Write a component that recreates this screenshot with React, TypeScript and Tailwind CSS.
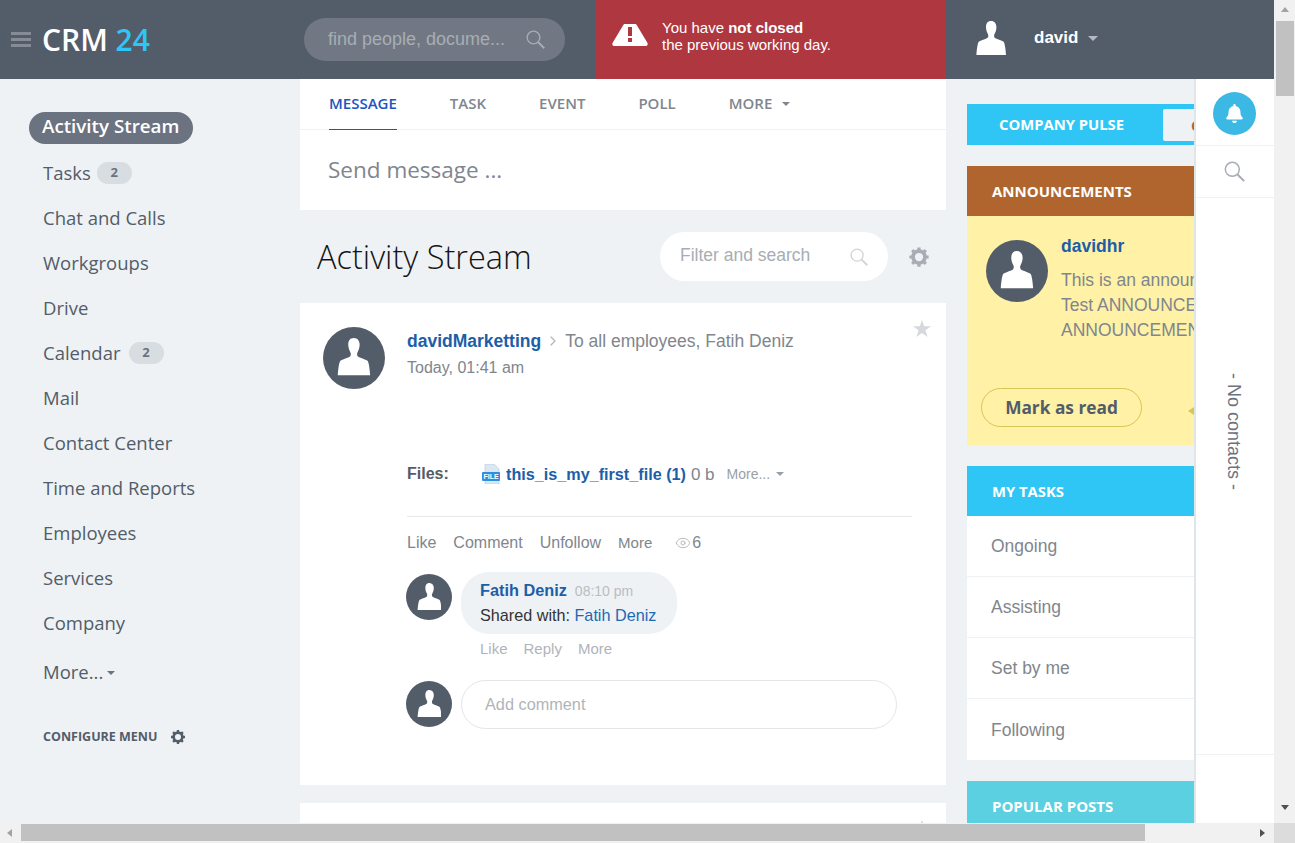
import { Eye, ChevronRight } from 'lucide-react';
import { FaBell } from 'react-icons/fa';

const menu = [
  { label: 'Tasks', count: 2, badge: 'ml-[6px]' },
  { label: 'Chat and Calls' },
  { label: 'Workgroups' },
  { label: 'Drive' },
  { label: 'Calendar', count: 2, badge: 'ml-[8px]' },
  { label: 'Mail' },
  { label: 'Contact Center' },
  { label: 'Time and Reports' },
  { label: 'Employees' },
  { label: 'Services' },
  { label: 'Company' },
];

const tasks = ['Ongoing', 'Assisting', 'Set by me', 'Following'];

const Person = ({ className }: { className: string }) => (
  <svg viewBox="0 0 30 34" className={className} fill="currentColor">
    <path d="M15 0c3.600 0 5.400 2.600 5.400 6.200 0 3-1 5.200-2 7-.5 1-.4 3 .4 3.600 1.500 1 7.200 2.800 8.800 4 1.200 1.200 2 7.400 2.400 13.200H.4c.4-5.800 1.200-12 2.400-13.200 1.600-1.200 7.300-3 8.800-4 .8-.6.9-2.600.4-3.600-1-1.800-2-4-2-7C10 2.600 11.400 0 15 0z" />
  </svg>
);

const Avatar = ({ size }: { size: string }) => (
  <div className={`${size} shrink-0 rounded-full bg-[#535c69] flex items-center justify-center text-white`}>
    <Person className="w-[54%] h-[60%] mb-[3%]" />
  </div>
);

const Gear = ({ className }: { className: string }) => (
  <svg viewBox="0 0 24 24" className={className} fill="none" stroke="currentColor">
    <circle cx="12" cy="12" r="6.500" strokeWidth="4" />
    <g strokeWidth="3.500">
      <path d="M12 1.500v4M12 18.500v4M1.500 12h4M18.500 12h4M4.600 4.600l2.800 2.800M16.600 16.600l2.800 2.800M4.600 19.400l2.800-2.800M16.600 7.400l2.800-2.800" />
    </g>
  </svg>
);

const Star = ({ className }: { className: string }) => (
  <svg viewBox="0 0 20 19" className={className} fill="currentColor">
    <polygon points="10,0 12.400,7 20,7 13.800,11.500 16.200,19 10,14.400 3.800,19 6.200,11.500 0,7 7.600,7" />
  </svg>
);

const SearchIcon = ({ className }: { className: string }) => (
  <svg viewBox="0 0 24 24" className={className} fill="none" stroke="currentColor">
    <circle cx="9.500" cy="9.500" r="8" strokeWidth="1.700" />
    <path d="M15.500 15.500L23 23" strokeWidth="2.400" />
  </svg>
);

const Caret = ({ className }: { className: string }) => (
  <span className={`inline-block w-0 h-0 border-x-[4px] border-x-transparent border-t-[4px] ${className}`} />
);

const FileIcon = () => (
  <svg viewBox="0 0 18 20" className="w-[18px] h-[20px] shrink-0 mt-[3px]">
    <path d="M3 0h9l5 5v15H3z" fill="#dbe7f3" stroke="#b4c8dc" strokeWidth="0.600" />
    <rect x="0" y="8" width="18" height="9" rx="1" fill="#2f8fe0" />
    <text x="9" y="15" textAnchor="middle" fontSize="7" fontWeight="700" fill="#fff" fontFamily="Liberation Sans">FILE</text>
  </svg>
);

export default function App() {
  return (
    <div className="relative w-[1295px] h-[843px] overflow-hidden bg-[#eef2f4] font-['Liberation_Sans',Arial,sans-serif]">
      <div className="w-[1274px] h-[823px] overflow-hidden">
        {/* top bar */}
        <header className="h-[79px] flex bg-[#535c69]">
          <div className="w-[304px] flex items-center pl-[11px]">
            <div className="w-[20px] flex flex-col gap-[3px] mr-[11px]">
              <span className="h-[3px] bg-[#868c95]" />
              <span className="h-[3px] bg-[#868c95]" />
              <span className="h-[3px] bg-[#868c95]" />
            </div>
            <span className="font-['Open_Sans',sans-serif] font-semibold text-[30px] text-white leading-none">
              CRM <span className="text-[#2fc6f6]">24</span>
            </span>
          </div>
          <div className="w-[292px]">
            <div className="mt-[18px] w-[261px] h-[43px] rounded-full bg-[#717884] flex items-center pl-[24px] pr-[20px] justify-between">
              <span className="text-[18px] text-[#a8adb4]">find people, docume...</span>
              <SearchIcon className="w-[19px] h-[19px] text-[#a8adb4]" />
            </div>
          </div>
          <div className="w-[350px] bg-[#ae3740] flex items-center pl-[16px] text-white">
            <svg viewBox="0 0 36 22" className="w-[36px] h-[22px] mb-[10px]">
              <path d="M11 1.500c.3-.9 1-1.500 2-1.500h10c1 0 1.700.6 2 1.500l10.500 17.500c.6 1.500-.3 3-2 3H2.500c-1.700 0-2.600-1.500-2-3z" fill="#fff" />
              <rect x="16" y="3" width="4" height="9" fill="#ae3740" />
              <rect x="16" y="14" width="4" height="4" fill="#ae3740" />
            </svg>
            <div className="ml-[14px] mb-[7px] text-[15px] leading-[17px]">
              <div>You have <b>not closed</b></div>
              <div>the previous working day.</div>
            </div>
          </div>
          <div className="flex-1 flex items-center pl-[30px] text-white">
            <Person className="w-[30px] h-[34px] mb-[4px]" />
            <span className="ml-[28px] mb-[3px] font-bold text-[17px]">david</span>
            <Caret className="ml-[10px] mb-[3px] border-t-[#b5b9bf] border-x-[5px] border-t-[5px]" />
          </div>
        </header>

        <div className="flex h-[744px]">
          {/* left menu */}
          <nav className="w-[300px] shrink-0 pt-[26px] font-['Open_Sans',sans-serif] text-[18.500px] text-[#535c69]">
            <div className="h-[45px] pt-[1px] flex items-center pl-[29px]">
              <span className="h-[32px] rounded-full bg-[#6b7280] text-white font-semibold pl-[13px] pr-[14px] pb-[3px] flex items-center text-[18.750px]">
                Activity Stream
              </span>
            </div>
            {menu.map((item) => (
              <div key={item.label} className="h-[45px] flex items-center pl-[43px]">
                {item.label}
                {item.count && (
                  <span className={`${item.badge} w-[35px] h-[22px] rounded-full bg-[#d8dde1] text-[13px] font-bold text-[#6b7280] flex items-center justify-center`}>
                    {item.count}
                  </span>
                )}
              </div>
            ))}
            <div className="mt-[4px] h-[45px] flex items-center pl-[43px]">
              More...
              <Caret className="ml-[4px] mt-[2px] border-t-[#6b7280]" />
            </div>
            <div className="mt-[34px] flex items-center pl-[43px] text-[12.500px] font-bold uppercase">
              Configure menu
              <Gear className="ml-[13px] w-[16px] h-[16px]" />
            </div>
          </nav>

          {/* center column */}
          <main className="w-[646px] shrink-0">
            <div className="bg-white h-[131px]">
              <div className="h-[51px] border-b border-[#eef2f4] flex pl-[29px] gap-[53px] font-['Open_Sans',sans-serif] font-semibold text-[15px] uppercase text-[#80868e]">
                <span className="h-[51px] pb-[2px] flex items-center text-[#2054c0] border-b-[1px] border-[#2054c0]">Message</span>
                <span className="h-[51px] pb-[2px] flex items-center">Task</span>
                <span className="h-[51px] pb-[2px] flex items-center">Event</span>
                <span className="h-[51px] pb-[2px] flex items-center">Poll</span>
                <span className="h-[51px] pb-[2px] flex items-center">
                  More
                  <Caret className="ml-[10px] border-t-[#80868e]" />
                </span>
              </div>
              <div className="h-[80px] flex items-center pl-[28px] font-['Open_Sans',sans-serif] text-[22.500px] text-[#80868e]">
                Send message ...
              </div>
            </div>

            <div className="h-[93px] flex items-center pl-[17px]">
              <h1 className="font-['Open_Sans',sans-serif] font-light text-[32.500px] text-[#151515] flex-1 pt-[2px]">Activity Stream</h1>
              <div className="w-[228px] h-[49px] rounded-full bg-white flex items-center justify-between pl-[20px] pr-[20px]">
                <span className="text-[17.500px] text-[#a8adb4] pb-[2px]">Filter and search</span>
                <SearchIcon className="w-[18px] h-[18px] text-[#d0d4d8]" />
              </div>
              <Gear className="ml-[20px] mr-[16px] w-[22px] h-[22px] text-[#a8adb4]" />
            </div>

            <article className="relative bg-white h-[482px] pl-[23px] pt-[24px]">
              <Star className="absolute right-[15px] top-[17px] w-[18px] h-[17px] text-[#d5d8dc]" />
              <div className="flex">
                <Avatar size="w-[62px] h-[62px]" />
                <div className="ml-[22px]">
                  <div className="flex items-center text-[17.500px] mt-[2px] h-[24px]">
                    <span className="font-bold text-[#1d5ea8]">davidMarketting</span>
                    <ChevronRight className="mx-[4px] w-[16px] h-[16px] text-[#b5b9bf]" />
                    <span className="text-[#80868e]">To all employees, Fatih Deniz</span>
                  </div>
                  <div className="mt-[3px] text-[16px] text-[#80868e]">Today, 01:41 am</div>
                </div>
              </div>

              <div className="ml-[84px] mt-[72px] w-[505px] h-[56px] flex items-start border-b border-[#e6e8ea]">
                <span className="font-bold text-[16px] text-[#535c69] w-[75px] mt-[1px]">Files:</span>
                <FileIcon />
                <span className="ml-[6px] font-bold text-[16.200px] text-[#1d5ea8] mt-[1px]">this_is_my_first_file (1)</span>
                <span className="ml-[5px] text-[17px] text-[#80868e] mt-[1px]">0 b</span>
                <span className="ml-[12px] text-[14px] text-[#9a9fa6] mt-[3px]">More...</span>
                <Caret className="ml-[6px] mt-[11px] border-t-[#9a9fa6]" />
              </div>

              <div className="ml-[84px] mt-[16px] flex items-center text-[16px] text-[#80868e] h-[20px]">
                <span>Like</span>
                <span className="ml-[17px]">Comment</span>
                <span className="ml-[17px]">Unfollow</span>
                <span className="ml-[17px] text-[15px]">More</span>
                <Eye className="ml-[23px] w-[16px] h-[16px] text-[#a8adb4]" strokeWidth={1.250} />
                <span className="ml-[1px]">6</span>
              </div>

              <div className="ml-[83px] mt-[19px] flex">
                <div className="mt-[2px]">
                  <Avatar size="w-[46px] h-[46px]" />
                </div>
                <div className="ml-[9px]">
                  <div className="w-[216px] h-[62px] rounded-[28px] bg-[#eef2f4] pl-[19px] pt-[6px]">
                    <div className="flex items-baseline">
                      <span className="font-bold text-[16.300px] text-[#1d5ea8]">Fatih Deniz</span>
                      <span className="ml-[8px] text-[14px] text-[#b9bdc2]">08:10 pm</span>
                    </div>
                    <div className="mt-[4px] text-[16.200px] leading-[18px] text-[#333]">
                      Shared with: <span className="text-[#1d6ab3]">Fatih Deniz</span>
                    </div>
                  </div>
                  <div className="mt-[4px] pl-[19px] flex gap-[16px] text-[15px] text-[#b0b4ba]">
                    <span>Like</span>
                    <span>Reply</span>
                    <span>More</span>
                  </div>
                </div>
              </div>

              <div className="ml-[83px] mt-[19px] flex items-center">
                <Avatar size="w-[46px] h-[46px]" />
                <div className="ml-[9px] w-[436px] h-[49px] rounded-full border border-[#e3e5e8] flex items-center pl-[23px] text-[16.300px] text-[#b0b4ba]">
                  Add comment
                </div>
              </div>
            </article>

            <div className="relative mt-[18px] h-[40px] bg-white">
              <Star className="absolute right-[15px] top-[17px] w-[18px] h-[17px] text-[#d5d8dc]" />
            </div>
          </main>

          {/* right column, cut off by the panel */}
          <aside className="ml-[21px] w-[300px] shrink-0 pt-[25px] font-['Open_Sans',sans-serif]">
            <div className="h-[41px] bg-[#2fc6f6] flex items-center pl-[32px] text-[14.800px] font-bold text-white uppercase">
              <span className="w-[164px]">Company Pulse</span>
              <span className="w-[100px] h-[32px] rounded-[2px] bg-[#eef2f4] pl-[28px] text-[#b1652e] leading-[32px]">C</span>
            </div>

            <div className="mt-[21px] h-[50px] bg-[#b1652e] flex items-center pl-[25px] text-[15px] font-bold text-white uppercase">
              Announcements
            </div>
            <div className="h-[229px] bg-[#fff1a6] pl-[14px] pt-[18px] font-['Liberation_Sans',sans-serif]">
              <div className="flex h-[154px] pl-[5px]">
                <div className="mt-[6px]">
                  <Avatar size="w-[62px] h-[62px]" />
                </div>
                <div className="ml-[13px] text-[17.500px] text-[#80868e] leading-[25px] whitespace-nowrap">
                  <div className="font-bold text-[#1d5ea8] mb-[9px]">davidhr</div>
                  <div>This is an announcement</div>
                  <div>Test ANNOUNCEMENT</div>
                  <div>ANNOUNCEMENT</div>
                </div>
              </div>
              <div className="flex items-center">
                <span className="w-[161px] h-[39px] rounded-full border border-[#d7c558] flex items-center justify-center font-['Open_Sans',sans-serif] font-bold text-[17.300px] text-[#535c69]">
                  Mark as read
                </span>
              </div>
            </div>

            <div className="mt-[21px] h-[50px] bg-[#2fc6f6] flex items-center pl-[25px] text-[14.800px] font-bold text-white uppercase">
              My tasks
            </div>
            <div className="bg-white font-['Liberation_Sans',sans-serif] text-[17.500px] text-[#80868e]">
              {tasks.map((t) => (
                <div key={t} className="h-[61px] flex items-center pl-[24px] border-b border-[#eef2f4] last:border-b-0 last:pt-[2px]">
                  {t}
                </div>
              ))}
            </div>

            <div className="mt-[21px] h-[50px] bg-[#5bd0e0] flex items-center pl-[25px] text-[15px] font-bold text-white uppercase">
              Popular posts
            </div>
          </aside>
        </div>
      </div>

      {/* chat panel sits over the right column */}
      <div className="absolute left-[1194px] top-[79px] w-[80px] h-[744px] bg-white border-l-2 border-[#dfe6ea] flex flex-col items-center">
        <div className="w-full h-[67px] border-b border-[#eef2f4] flex items-center justify-center pt-[3px] pr-[1px]">
          <div className="w-[43px] h-[43px] rounded-full bg-[#3bb8e3] flex items-center justify-center">
            <FaBell className="w-[19px] h-[19px] text-white" />
          </div>
        </div>
        <div className="w-full h-[52px] border-b border-[#eef2f4] flex items-center justify-center pr-[2px]">
          <SearchIcon className="w-[21px] h-[21px] text-[#a8adb4]" />
        </div>
        <div className="w-full h-[557px] border-b border-[#eef2f4] flex justify-center pt-[175px] pr-[4px] text-[18px] text-[#6b7280]">
          <span className="[writing-mode:vertical-rl] whitespace-nowrap h-fit">- No contacts -</span>
        </div>
      </div>
      <span className="absolute left-[1188px] top-[407px] w-[6px] h-[8px] bg-[#d7c558] [clip-path:polygon(100%_0,100%_100%,0_50%)]" />

      {/* browser scrollbars */}
      <div className="absolute right-0 top-0 w-[21px] h-[843px] bg-[#f1f1f1] flex flex-col items-center">
        <span className="mt-[7px] w-0 h-0 border-x-[4px] border-x-transparent border-b-[5px] border-b-[#a3a3a3]" />
        <span className="mt-[9px] w-[18px] h-[75px] bg-[#c1c1c1]" />
        <span className="mt-[709px] w-0 h-0 border-x-[4px] border-x-transparent border-t-[5px] border-t-[#505050]" />
      </div>
      <div className="absolute left-0 bottom-0 w-[1274px] h-[20px] bg-[#f1f1f1] flex items-start">
        <span className="ml-[7px] mt-[6px] w-0 h-0 border-y-[4px] border-y-transparent border-r-[5px] border-r-[#a3a3a3]" />
        <span className="ml-[9px] mt-[1px] w-[1124px] h-[17px] bg-[#c1c1c1]" />
        <span className="ml-[115px] mt-[6px] w-0 h-0 border-y-[4px] border-y-transparent border-l-[5px] border-l-[#505050]" />
      </div>
      <div className="absolute right-0 bottom-0 w-[21px] h-[20px] bg-[#dcdcdc]" />
    </div>
  );
}
